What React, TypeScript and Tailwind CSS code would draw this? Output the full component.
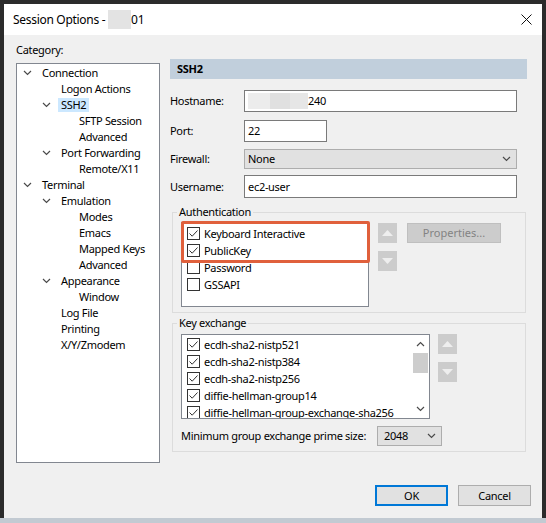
import type { ReactNode } from "react";

type TreeNode = { label: string; level: number; open?: boolean; selected?: boolean };

const tree: TreeNode[] = [
  { label: "Connection", level: 0, open: true },
  { label: "Logon Actions", level: 1 },
  { label: "SSH2", level: 1, open: true, selected: true },
  { label: "SFTP Session", level: 2 },
  { label: "Advanced", level: 2 },
  { label: "Port Forwarding", level: 1, open: true },
  { label: "Remote/X11", level: 2 },
  { label: "Terminal", level: 0, open: true },
  { label: "Emulation", level: 1, open: true },
  { label: "Modes", level: 2 },
  { label: "Emacs", level: 2 },
  { label: "Mapped Keys", level: 2 },
  { label: "Advanced", level: 2 },
  { label: "Appearance", level: 1, open: true },
  { label: "Window", level: 2 },
  { label: "Log File", level: 1 },
  { label: "Printing", level: 1 },
  { label: "X/Y/Zmodem", level: 1 },
];

const indent = ["pl-[6px]", "pl-[25px]", "pl-[43px]"];

const kex = [
  "ecdh-sha2-nistp521",
  "ecdh-sha2-nistp384",
  "ecdh-sha2-nistp256",
  "diffie-hellman-group14",
  "diffie-hellman-group-exchange-sha256",
];

function Chevron({ className = "" }: { className?: string }) {
  return (
    <svg width="9" height="6" viewBox="0 0 9 6" className={className}>
      <path d="M1 1 L4.5 4.5 L8 1" fill="none" stroke="#4a4a4a" strokeWidth="1.2" />
    </svg>
  );
}

function Checkbox({ checked }: { checked: boolean }) {
  return (
    <span className="w-[13px] h-[13px] border border-[#333] bg-white flex items-center justify-center shrink-0">
      {checked && (
        <svg width="11" height="11" viewBox="0 0 11 11">
          <path d="M1.5 5.5 L4.2 8.2 L9.5 2.5" fill="none" stroke="#333" strokeWidth="1" />
        </svg>
      )}
    </span>
  );
}

function ArrowButton({ up }: { up?: boolean }) {
  return (
    <div className="w-[19px] h-[20px] bg-[#cccccc] flex items-center justify-center">
      <svg width="11" height="6" viewBox="0 0 11 6">
        <path d={up ? "M0 6 L5.5 0 L11 6 Z" : "M0 0 L5.5 6 L11 0 Z"} fill="#eeeeee" />
      </svg>
    </div>
  );
}

function Field({ label, children }: { label: string; children: ReactNode }) {
  return (
    <div className="flex items-center">
      <span className="w-[74px] shrink-0">{label}</span>
      {children}
    </div>
  );
}

export default function App() {
  return (
    <div className="w-[546px] h-[523px] bg-[#2b2b2b] flex flex-col overflow-hidden font-['Noto_Sans',sans-serif] text-[11px] leading-[14px] tracking-[-0.3px] text-black">
      <div className="pt-[4px] pl-[4px]">
        <div className="w-[538px] h-[514px] bg-[#f0f0f0] flex flex-col">
          {/* Title bar */}
          <div className="h-[31px] bg-white flex items-center pl-[9px] pr-[10px] shrink-0">
            <span className="text-[12px] flex items-center">
              Session Options -&nbsp;
              <span className="inline-block w-[23px] h-[19px] bg-[#e3e3e3]" />
              01
            </span>
            <svg width="11" height="11" viewBox="0 0 11 11" className="ml-auto">
              <path d="M0.5 0.5 L10.5 10.5 M10.5 0.5 L0.5 10.5" stroke="#111" strokeWidth="1" />
            </svg>
          </div>

          <div className="flex-1 flex flex-col">
            <div className="flex">
              {/* Category tree */}
              <div className="ml-[12px] w-[144px]">
                <div className="h-[28px] pt-[8px]">Category:</div>
                <div className="h-[400px] border border-[#828790] bg-white pt-[1px]">
                  {tree.map((n, i) => (
                    <div key={i} className={`h-[16px] flex items-center ${indent[n.level]}`}>
                      <span className="w-[16px] shrink-0 flex items-center">
                        {n.open && <Chevron />}
                      </span>
                      <span className={`px-[3px] h-[14px] flex items-center ${n.selected ? "bg-[#cce8ff]" : ""}`}>
                        {n.label}
                      </span>
                    </div>
                  ))}
                </div>
              </div>

              {/* SSH2 page */}
              <div className="ml-[10px] w-[357px] pt-[24px] flex flex-col">
                <div className="h-[20px] bg-[#c1cfdc] font-bold flex items-center pl-[7px]">SSH2</div>

                <div className="mt-[11px]">
                  <Field label="Hostname:">
                    <div className="w-[273px] h-[22px] border border-[#7a7a7a] bg-white flex items-center pl-[3px]">
                      <span className="w-[22px] h-[16px] bg-[#ececec]" />
                      <span className="w-[20px] h-[16px] bg-[#e0e0e0]" />
                      <span className="w-[18px] h-[16px] bg-[#e6e6e6]" />
                      <span>240</span>
                    </div>
                  </Field>
                </div>
                <div className="mt-[8px]">
                  <Field label="Port:">
                    <div className="w-[83px] h-[22px] border border-[#7a7a7a] bg-white flex items-center pl-[3px]">22</div>
                  </Field>
                </div>
                <div className="mt-[7px]">
                  <Field label="Firewall:">
                    <div className="w-[273px] h-[20px] border border-[#adadad] bg-[#e1e1e1] flex items-center pl-[3px] pr-[5px]">
                      None
                      <Chevron className="ml-auto" />
                    </div>
                  </Field>
                </div>
                <div className="mt-[6px]">
                  <Field label="Username:">
                    <div className="w-[273px] h-[23px] border border-[#7a7a7a] bg-white flex items-center pl-[3px]">ec2-user</div>
                  </Field>
                </div>

                {/* Authentication */}
                <fieldset className="mt-[7px] ml-[2px] w-[354px] border border-[#dcdcdc] pl-[8px] pb-[5px] pt-[3px]">
                  <legend className="-ml-[4px] px-[2px]">Authentication</legend>
                  <div className="flex items-start">
                    <div className="relative">
                      <div className="w-[188px] h-[85px] border border-[#828790] bg-white pt-[2px] pl-[5px]">
                        {[
                          ["Keyboard Interactive", true],
                          ["PublicKey", true],
                          ["Password", false],
                          ["GSSAPI", false],
                        ].map(([t, c]) => (
                          <div key={t as string} className="h-[17px] flex items-center gap-[4px]">
                            <Checkbox checked={c as boolean} />
                            <span>{t}</span>
                          </div>
                        ))}
                      </div>
                      <div className="absolute left-0 top-[-1px] w-[189px] h-[42px] border-[3px] border-[#e0603c] rounded-[2px]" />
                    </div>
                    <div className="ml-[9px] mt-[1px] flex flex-col gap-[8px]">
                      <ArrowButton up />
                      <ArrowButton />
                    </div>
                    <div className="ml-[10px] mt-[1px] w-[94px] h-[20px] bg-[#cccccc] border border-[#bfbfbf] text-[#838383] tracking-normal flex items-center justify-center">
                      Properties...
                    </div>
                  </div>
                </fieldset>

                {/* Key exchange */}
                <fieldset className="mt-[3px] ml-[2px] w-[354px] border border-[#dcdcdc] pl-[8px] pb-[5px] pt-[4px]">
                  <legend className="-ml-[4px] px-[2px]">Key exchange</legend>
                  <div className="flex items-start">
                    <div className="w-[249px] h-[85px] border border-[#828790] bg-white flex overflow-hidden">
                      <div className="flex-1 pt-[1px] pl-[5px]">
                        {kex.map((k) => (
                          <div key={k} className="h-[17px] flex items-center gap-[4px] whitespace-nowrap">
                            <Checkbox checked />
                            <span>{k}</span>
                          </div>
                        ))}
                      </div>
                      <div className="w-[17px] shrink-0 flex flex-col items-center pt-[6px] pb-[6px]">
                        <Chevron className="rotate-180" />
                        <div className="mt-[6px] w-[15px] h-[20px] bg-[#cdcdcd]" />
                        <Chevron className="mt-auto" />
                      </div>
                    </div>
                    <div className="ml-[8px] flex flex-col gap-[8px]">
                      <ArrowButton up />
                      <ArrowButton />
                    </div>
                  </div>
                  <div className="mt-[7px] flex items-center">
                    <span className="w-[196px]">Minimum group exchange prime size:</span>
                    <div className="w-[65px] h-[20px] border border-[#adadad] bg-[#e1e1e1] flex items-center pl-[6px] pr-[5px]">
                      2048
                      <Chevron className="ml-auto" />
                    </div>
                  </div>
                </fieldset>
              </div>
            </div>

            {/* Dialog buttons */}
            <div className="mt-auto mb-[12px] mr-[11px] flex justify-end gap-[10px]">
              <div className="w-[73px] h-[21px] border-2 border-[#0078d7] bg-[#e1e1e1] flex items-center justify-center">OK</div>
              <div className="w-[73px] h-[21px] border border-[#adadad] bg-[#e1e1e1] flex items-center justify-center">Cancel</div>
            </div>
          </div>
        </div>
      </div>
      <div className="h-[5px] bg-[#c2cad2]" />
    </div>
  );
}
